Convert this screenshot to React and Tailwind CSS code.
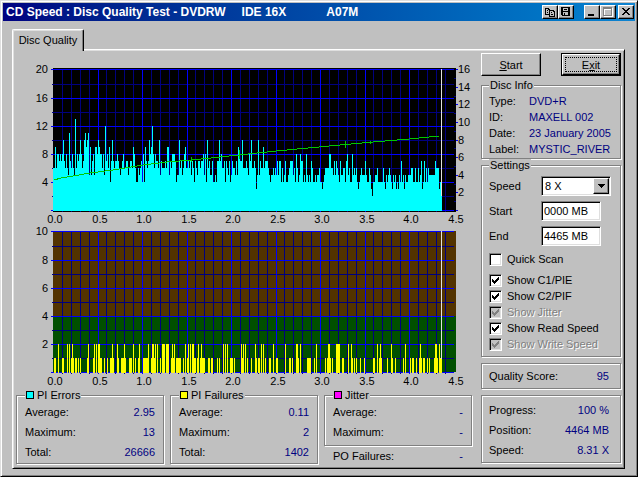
import React, { useState } from "react";

// One character per column, base 16: PI errors found in each scanned block
const PI_ERRORS =
  "6696887878a76865b76865d6878a867ab9ab595785998" +
  "a988685c786947a767787656786677567769864465674" +
  "849767a89c868776a5766676995768887455a67568966" +
  "7675764765776778584a67557445477a786674765745" +
  "76657598" +
  "77a66676587a667635a57669677765" +
  "4556565757746457445677756486458774548545" +
  "4764454556443456666886657576547556647856" +
  "4485656434565557544653244556444446435456" +
  "5435453435474535445556644644645734746465" +
  "555557666342";

// Column ranges [first, last] holding one or two PI failures
const PI_FAILURES = {
  1: [
    [1, 2], [9, 10], [18, 20], [22, 23], [25, 25], [27, 27], [34, 34], [40, 40], [47, 48], [51, 51],
    [54, 54], [57, 60], [65, 65], [68, 72], [76, 78], [82, 82], [85, 85], [90, 94], [98, 98], [101, 101],
    [107, 107], [113, 113], [118, 121], [123, 127], [130, 130], [134, 134], [141, 142], [144, 144],
    [147, 147], [149, 151], [155, 156], [158, 159], [164, 164], [166, 166], [177, 179], [181, 181],
    [189, 189], [194, 194], [198, 198], [203, 203], [205, 206], [212, 212], [216, 217], [223, 224],
    [236, 237], [239, 239], [245, 245], [254, 257], [261, 261], [272, 272], [274, 274], [277, 277],
    [279, 279], [289, 290], [299, 299], [301, 301], [303, 303], [307, 307], [311, 311], [320, 321],
    [326, 326], [328, 328], [334, 334], [339, 339], [342, 342], [350, 350], [357, 357], [359, 360],
    [363, 363], [366, 366], [368, 368], [370, 371], [374, 374], [376, 376], [381, 381], [384, 384],
    [387, 388],
  ],
  2: [
    [5, 5], [14, 14], [16, 16], [19, 19], [35, 35], [41, 41], [43, 43], [45, 46], [59, 59], [64, 64],
    [71, 71], [80, 80], [86, 86], [95, 95], [99, 100], [102, 102], [104, 104], [109, 111], [113, 115],
    [119, 119], [121, 121], [132, 132], [135, 135], [137, 137], [139, 140], [145, 145], [148, 148],
    [170, 170], [172, 172], [174, 174], [188, 188], [190, 190], [192, 192], [202, 202], [208, 208],
    [210, 210], [220, 220], [232, 232], [243, 244], [247, 247], [263, 263], [275, 276], [283, 286],
    [295, 295], [298, 298], [324, 324], [327, 327], [338, 338], [352, 352], [367, 367], [382, 383],
    [386, 386],
  ],
};

const READ_SPEED =
  "1,111 8,109 20,107 37,104 60,101 90,96 114,93 139,91 167,88 186,86 223,82 255,79 287,76 320,73 356,70 386,67";

const ROWS = [0, 15, 29, 43, 57, 71, 85, 99, 113, 127, 141];
const COLS = Array.from({ length: 46 }, (_, i) => Math.floor(0.5 + 8.9 * i));

function Grid() {
  return (
    <g>
      {COLS.map((x, i) =>
        i > 0 && i < 45 && i % 5 ? <rect key={i} x={x} y="0" width="1" height="143" fill="#000080" /> : null
      )}
      {ROWS.map((y, i) =>
        i % 2 ? <rect key={y} x="-1" y={y} width="402" height="1" fill="#000080" /> : null
      )}
      {COLS.map((x, i) =>
        i > 0 && i < 45 && i % 5 === 0 ? <rect key={i} x={x} y="0" width="1" height="143" fill="#0000ff" /> : null
      )}
      {ROWS.map((y, i) =>
        i % 2 === 0 ? <rect key={y} x="-2" y={y} width="403" height="1" fill="#0000ff" /> : null
      )}
    </g>
  );
}

function AxisLabels({ left }) {
  return (
    <g className="fill-black text-[11px]">
      {left.map((n, i) => (
        <text key={n} x="-5" y={ROWS[i * 2] + 4} textAnchor="end">
          {n}
        </text>
      ))}
      {[0, 5, 10, 15, 20, 25, 30, 35, 40, 45].map((n) => (
        <text key={n} x={COLS[n] + 2} y="154" textAnchor="middle">
          {(n / 10).toFixed(1)}
        </text>
      ))}
    </g>
  );
}

function ErrorsChart() {
  return (
    <svg viewBox="-37 -7 456 164" className="block w-full" shapeRendering="crispEdges">
      <rect x="0" y="-1" width="403" height="144" fill="#000" />
      <Grid />
      {[...PI_ERRORS].map((c, i) => {
        const h = parseInt(c, 16) * 7 + 1;
        return <rect key={i} x={i} y={142 - h} width="1" height={h} fill="#00ffff" />;
      })}
      <polyline points={READ_SPEED} fill="none" stroke="#00c800" strokeWidth="1" />
      <path d="M186.5 81v9M138.5 88v5M292.5 72v7M317.5 72v3" stroke="#00c800" fill="none" />
      <rect x="388" y="0" width="1" height="127" fill="#e0e0e0" />
      {Array.from({ length: 17 }, (_, i) => (
        <rect
          key={i}
          x={i % 2 ? 401 : 403}
          y={Math.round(141 - i * 8.8)}
          width="2"
          height="1"
          fill={i % 2 ? "#000080" : "#0000ff"}
        />
      ))}
      <AxisLabels left={[20, 16, 12, 8, 4]} />
      <g className="fill-black text-[11px]">
        {[16, 14, 12, 10, 8, 6, 4, 2].map((n) => (
          <text key={n} x="405" y={Math.round(141 - n * 8.8) + 4}>
            {n}
          </text>
        ))}
      </g>
    </svg>
  );
}

function FailuresChart() {
  return (
    <svg viewBox="-37 -5 456 163" className="block w-full" shapeRendering="crispEdges">
      <rect x="0" y="0" width="403" height="85" fill="#533300" />
      <rect x="0" y="85" width="403" height="56" fill="#005000" />
      <Grid />
      {[1, 2].map((n) =>
        PI_FAILURES[n].map(([a, b]) => (
          <rect key={`${n}-${a}`} x={a} y={141 - n * 14} width={b - a + 1} height={n * 14 + 1} fill="#ffff00" />
        ))
      )}
      <rect x="388" y="0" width="1" height="128" fill="#e0e0e0" />
      <AxisLabels left={[10, 8, 6, 4, 2]} />
    </svg>
  );
}

const etched = "border border-[#808080] shadow-[1px_1px_0_#fff,inset_1px_1px_0_#fff]";
const sunken =
  "bg-white border border-[#808080] border-r-white border-b-white shadow-[inset_1px_1px_0_#000,inset_-1px_-1px_0_#dfdfdf]";
const raised =
  "bg-[#c0c0c0] border border-white border-r-black border-b-black shadow-[inset_-1px_-1px_0_#808080]";

function Group({ title, swatch, className = "", children }) {
  return (
    <fieldset className={`min-w-0 ${etched} ${className}`}>
      <legend className="flex h-3 items-center gap-[3px] bg-[#c0c0c0] px-px leading-3">
        {swatch && <span className={`size-2 border border-black ${swatch}`} />}
        {title}
      </legend>
      {children}
    </fieldset>
  );
}

function Stat({ label, value }) {
  return (
    <div className="flex h-5 items-center justify-between">
      <span>{label}</span>
      <span className="text-[#000080]">{value}</span>
    </div>
  );
}

function InfoRow({ label, value }) {
  return (
    <div className="flex h-4 items-center">
      <span className="w-10">{label}</span>
      <span className="whitespace-nowrap text-[#000080]">{value}</span>
    </div>
  );
}

function Check({ label, checked, disabled }) {
  return (
    <label className="flex h-4 items-center gap-1">
      <span className="grid size-[13px]">
        <input
          type="checkbox"
          defaultChecked={checked}
          disabled={disabled}
          className={`peer col-start-1 row-start-1 size-[13px] appearance-none disabled:bg-[#c0c0c0] ${sunken}`}
        />
        <svg
          viewBox="0 0 13 13"
          shapeRendering="crispEdges"
          className="pointer-events-none invisible col-start-1 row-start-1 size-[13px] fill-black peer-checked:visible peer-disabled:fill-[#808080]"
        >
          <path d="M3 5h1v3h-1zM4 6h1v3h-1zM5 7h1v3h-1zM6 6h1v3h-1zM7 5h1v3h-1zM8 4h1v3h-1zM9 3h1v3h-1z" />
        </svg>
      </span>
      <span className={disabled ? "pl-px text-[#808080] [text-shadow:1px_1px_0_#fff]" : "pl-px"}>{label}</span>
    </label>
  );
}

function TitleButton({ label, children }) {
  return (
    <button type="button" aria-label={label} className={`flex h-3.5 w-4 items-center justify-center ${raised}`}>
      <svg viewBox="0 0 12 10" className="h-2.5 w-3 shrink-0" shapeRendering="crispEdges">
        {children}
      </svg>
    </button>
  );
}

export default function App() {
  const [speed, setSpeed] = useState("8 X");
  const [start, setStart] = useState("0000 MB");
  const [end, setEnd] = useState("4465 MB");

  return (
    <div className="min-h-screen border border-[#dfdfdf] border-r-black border-b-black bg-[#c0c0c0] p-0.5 font-['Liberation_Sans',Arial,sans-serif] text-[11px] leading-3 text-black shadow-[inset_1px_1px_0_#fff,inset_-1px_-1px_0_#808080]">
      {/* Title bar */}
      <header className="flex h-[18px] items-center bg-linear-to-r from-[#000080] to-[#1084d0] pr-px pl-[3px] text-white">
        <h1 className="flex flex-1 gap-4 text-[12px] font-bold whitespace-nowrap">
          <span>CD Speed : Disc Quality Test - DVDRW</span>
          <span>IDE 16X</span>
          <span className="ml-6">A07M</span>
        </h1>
        <div className="flex">
          <TitleButton label="Copy">
            <path
              d="M1 1h4v1h1v1h4v1h1v6h-6v-2h-4zM2 2v5h3v-4h-1v-1zM6 4v5h4v-4h-1v-1z"
              fillRule="evenodd"
            />
            <path d="M3 3h1v1h-1zM3 5h1v1h-1zM7 5h1v1h-1zM7 7h2v1h-2z" />
          </TitleButton>
          <TitleButton label="Save">
            <path d="M1 0h9v9h-8v-1h-1zM3 1v3h5v-3zM3 5v3h1v-2h1v2h3v-3z" fillRule="evenodd" />
            <path d="M4 2h3v1h-3z" />
          </TitleButton>
        </div>
        <div className="ml-2.5 flex">
          <TitleButton label="Minimize">
            <path d="M2 7h6v2h-6z" />
          </TitleButton>
          <TitleButton label="Maximize">
            <path d="M2 1h9v9h-9zM3 3v6h7v-6z" fill="#fff" fillRule="evenodd" />
            <path d="M1 0h9v9h-9zM2 2v6h7v-6z" fill="#808080" fillRule="evenodd" />
          </TitleButton>
        </div>
        <div className="ml-0.5 flex">
          <TitleButton label="Close">
            <path d="M2 1h2v1h1v1h2v-1h1v-1h2v1h-1v1h-1v1h-1v1h1v1h1v1h1v1h-2v-1h-1v-1h-2v1h-1v1h-2v-1h1v-1h1v-1h1v-1h-1v-1h-1v-1h-1z" />
          </TitleButton>
        </div>
      </header>

      <main className="pt-2 pr-2.5 pb-[5px] pl-[9px]">
        {/* Tab strip */}
        <div role="tablist" className="flex">
          <button
            type="button"
            role="tab"
            aria-selected="true"
            className="relative -mb-0.5 h-[22px] w-[72px] rounded-t-[2px] border-t border-r border-l border-t-white border-r-black border-l-white bg-[#c0c0c0] pb-0.5 shadow-[inset_-1px_0_0_#808080,inset_1px_1px_0_#dfdfdf]"
          >
            Disc Quality
          </button>
        </div>

        <div className="flex gap-[9px] border border-white border-r-black border-b-black px-[3px] pt-px pb-0.5 shadow-[inset_1px_1px_0_#dfdfdf,inset_-1px_-1px_0_#808080]">
          {/* Charts and totals */}
          <section className="min-w-0 flex-1 pt-[11px]">
            <ErrorsChart />
            <FailuresChart />
            <div className="grid grid-cols-3 items-start gap-1.5">
              <Group title="PI Errors" swatch="bg-[#00ffff]" className="px-2 pt-px pb-px">
                <Stat label="Average:" value="2.95" />
                <Stat label="Maximum:" value="13" />
                <Stat label="Total:" value="26666" />
              </Group>
              <Group title="PI Failures" swatch="bg-[#ffff00]" className="px-2 pt-px pb-px">
                <Stat label="Average:" value="0.11" />
                <Stat label="Maximum:" value="2" />
                <Stat label="Total:" value="1402" />
              </Group>
              <div>
                <Group title="Jitter" swatch="bg-[#ff00ff]" className="px-2 pt-px pb-[3px]">
                  <Stat label="Average:" value="-" />
                  <Stat label="Maximum:" value="-" />
                </Group>
                <div className="px-[9px]">
                  <Stat label="PO Failures:" value="-" />
                </div>
              </div>
            </div>
          </section>

          {/* Controls */}
          <aside className="w-[140px] shrink-0 pt-0.5">
            <div className="mb-[3px] flex justify-between">
              <button type="button" className={`h-[23px] w-[60px] ${raised}`}>
                <u>S</u>tart
              </button>
              <button type="button" className="h-[23px] w-[60px] border border-black">
                <span className={`flex h-full items-center p-0.5 ${raised}`}>
                  <span className="flex h-full flex-1 items-center justify-center border border-dotted border-black">
                    E<u>x</u>it
                  </span>
                </span>
              </button>
            </div>

            <Group title="Disc Info" className="px-[7px] pt-0.5 pb-px">
              <InfoRow label="Type:" value="DVD+R" />
              <InfoRow label="ID:" value="MAXELL 002" />
              <InfoRow label="Date:" value="23 January 2005" />
              <InfoRow label="Label:" value="MYSTIC_RIVER" />
            </Group>

            <Group title="Settings" className="px-[7px] pt-[5px] pb-1">
              <div className="grid grid-cols-[52px_1fr] items-center gap-y-[5px]">
                <label htmlFor="speed">Speed</label>
                <span className="grid w-[70px]">
                  <select
                    id="speed"
                    value={speed}
                    onChange={(e) => setSpeed(e.target.value)}
                    className={`col-start-1 row-start-1 h-5 appearance-none pl-[3px] ${sunken}`}
                  >
                    <option>4 X</option>
                    <option>8 X</option>
                    <option>16 X</option>
                  </select>
                  <span
                    className={`pointer-events-none col-start-1 row-start-1 mr-0.5 flex h-4 w-4 items-center justify-center self-center justify-self-end ${raised}`}
                  >
                    <svg viewBox="0 0 7 4" className="h-1 w-[7px]" shapeRendering="crispEdges">
                      <path d="M0 0h7v1h-1v1h-1v1h-1v1h-1v-1h-1v-1h-1v-1h-1z" />
                    </svg>
                  </span>
                </span>
                <label htmlFor="start">Start</label>
                <input
                  id="start"
                  value={start}
                  onChange={(e) => setStart(e.target.value)}
                  className={`h-5 w-[60px] px-0.5 ${sunken}`}
                />
                <label htmlFor="end">End</label>
                <input
                  id="end"
                  value={end}
                  onChange={(e) => setEnd(e.target.value)}
                  className={`h-5 w-[60px] px-0.5 ${sunken}`}
                />
              </div>
              <div className="py-[5px]">
                <Check label="Quick Scan" />
              </div>
              <Check label="Show C1/PIE" checked />
              <Check label="Show C2/PIF" checked />
              <Check label="Show Jitter" checked disabled />
              <Check label="Show Read Speed" checked />
              <Check label="Show Write Speed" checked disabled />
            </Group>

            <div className={`mt-1.5 px-[7px] py-0.5 ${etched}`}>
              <div className="pr-1">
                <Stat label="Quality Score:" value="95" />
              </div>
            </div>
            <div className={`mt-1.5 px-[7px] pt-1 pb-0.5 ${etched}`}>
              <div className="pr-1">
                <Stat label="Progress:" value="100 %" />
                <Stat label="Position:" value="4464 MB" />
                <Stat label="Speed:" value="8.31 X" />
              </div>
            </div>
          </aside>
        </div>
      </main>
    </div>
  );
}
